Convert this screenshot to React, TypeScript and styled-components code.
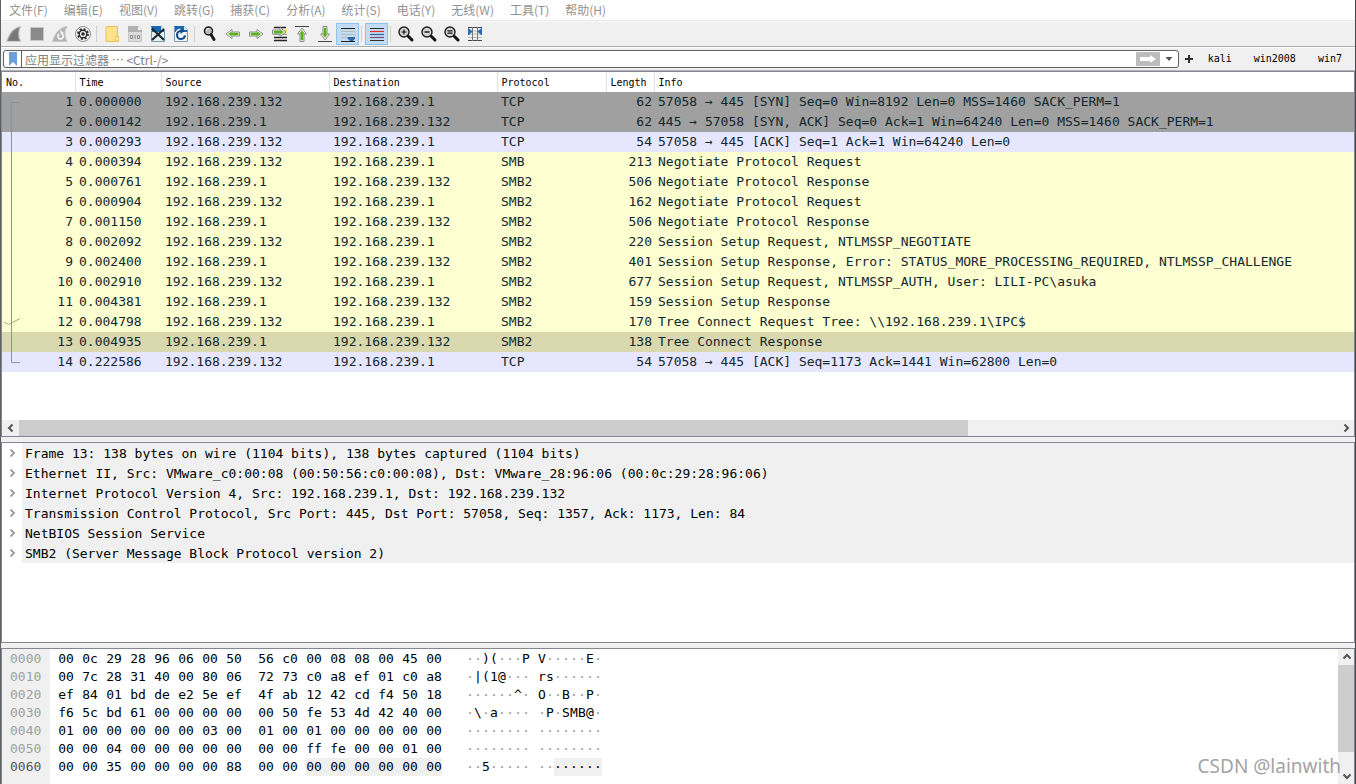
import React from "react";
import styled, { createGlobalStyle, css } from "styled-components";

const line = "#828790";
const face = "#f0f0f0";
const mono = `"DejaVu Sans Mono", "Liberation Mono", monospace`;
const cjk = `"Noto Sans CJK SC", "Noto Sans", sans-serif`;

const GlobalStyle = createGlobalStyle`
  * { box-sizing: border-box; }
  body { margin: 0; background: ${face}; color: #000; font-family: ${cjk}; font-size: 12px; }
  button, input { font: inherit; color: inherit; margin: 0; padding: 0; border: 0; background: none; }
`;

const Window = styled.div`
  position: relative;
  display: grid;
  grid-template-rows: auto auto auto minmax(0, 366fr) 5px minmax(0, 201fr) 5px minmax(0, 136fr);
  grid-template-columns: minmax(0, 1fr);
  height: 100vh;
  overflow: hidden;
  border-left: 1px solid #5c6266;
  border-right: 1px solid #45484c;
`;

const MenuBar = styled.nav`
  display: flex;
  gap: 16px;
  height: 21px;
  padding-left: 8px;
  background: #fff;
  border-bottom: 1px solid #e8e8e8;
`;

const MenuItem = styled.button`
  height: 20px;
  line-height: 20px;
  color: #929292;
  white-space: nowrap;
`;

const ToolBar = styled.div`
  display: flex;
  align-items: center;
  height: 26px;
  padding-left: 1px;
  background: ${face};
  border-top: 1px solid #fafafa;
  border-bottom: 1px solid #adadad;
`;

const ToolButton = styled.button<{ $on?: boolean }>`
  display: flex;
  align-items: center;
  justify-content: center;
  width: 23px;
  height: 22px;
  flex: none;
  ${(p) => p.$on && css`
    background: #c2ddf3;
    border: 1px solid #90c3ec;
  `}
`;

const Separator = styled.span`
  width: 1px;
  height: 16px;
  margin: 0 3px 0 2px;
  flex: none;
  background: #cfcfcf;
`;

const FilterBar = styled.form`
  display: flex;
  align-items: center;
  height: 24px;
  padding: 0 13px 0 2px;
  background: ${face};
  border-top: 1px solid #fff;
  border-bottom: 1px solid #b4b4b4;
`;

const FilterBox = styled.div`
  display: flex;
  align-items: center;
  flex: 1;
  min-width: 0;
  height: 18px;
  background: #fff;
  border: 1px solid #606060;
  border-radius: 3px;
`;

const BookmarkButton = styled.button`
  display: flex;
  align-items: center;
  justify-content: center;
  width: 18px;
  height: 16px;
  flex: none;
  border-right: 1px solid #606060;
`;

const FilterInput = styled.input`
  flex: 1;
  min-width: 0;
  height: 16px;
  padding-left: 3px;
  outline: none;
  &::placeholder { color: #808080; opacity: 1; }
`;

const ApplyButton = styled.button`
  display: flex;
  align-items: center;
  justify-content: center;
  width: 24px;
  height: 14px;
  border-radius: 1px;
  background: #bcbcbc;
`;

const HistoryButton = styled.button`
  display: flex;
  align-items: center;
  justify-content: center;
  width: 18px;
  height: 16px;
`;

const AddButton = styled(HistoryButton)`
  width: 20px;
`;

const Shortcut = styled.button`
  margin-left: 22px;
  font-family: ${mono};
  font-size: 10px;
  line-height: 16px;
  &:first-of-type { margin-left: 9px; }
`;

const Shortcuts = styled.div`
  display: flex;
`;

const Pane = styled.section`
  display: flex;
  flex-direction: column;
  overflow: hidden;
  background: #fff;
  border: 1px solid ${line};
`;

const Splitter = styled.div`
  background: ${face};
`;

const TableArea = styled.div`
  flex: 1;
  min-height: 0;
  overflow: hidden;
`;

const PacketTable = styled.table`
  width: 100%;
  table-layout: fixed;
  border-collapse: collapse;
`;

const Col = styled.col<{ $w?: number }>`
  ${(p) => p.$w && `width: ${p.$w}px;`}
`;

const HeadCell = styled.th`
  height: 20px;
  padding: 1px 0 0 4px;
  border-right: 1px solid #e2e2e2;
  font-family: ${mono};
  font-size: 10px;
  font-weight: 400;
  line-height: 19px;
  text-align: left;
  white-space: nowrap;
  &:last-child { border-right: 0; }
`;

type Tone = "gray" | "lavender" | "yellow" | "selected";
const tones: Record<Tone, string> = {
  gray: "#a0a0a0",
  lavender: "#e7e6ff",
  yellow: "#feffd0",
  selected: "#d9d8af",
};

const PacketRow = styled.tr<{ $tone: Tone }>`
  background: ${(p) => tones[p.$tone]};
  color: #12272e;
`;

const Cell = styled.td<{ $right?: boolean }>`
  height: 20px;
  padding: 0 2px 0 4px;
  font-family: ${mono};
  font-size: 13px;
  line-height: 20px;
  text-align: ${(p) => (p.$right ? "right" : "left")};
  white-space: nowrap;
  overflow: hidden;
`;

const NumberCell = styled(Cell)`
  padding-left: 0;
`;

const NumberBox = styled.div`
  display: flex;
  justify-content: space-between;
`;

const HScroll = styled.div`
  display: flex;
  height: 16px;
  flex: none;
  background: ${face};
`;

const VScroll = styled.div`
  display: flex;
  flex-direction: column;
  width: 16px;
  flex: none;
  background: ${face};
`;

const ScrollButton = styled.button`
  display: flex;
  align-items: center;
  justify-content: center;
  width: 17px;
  height: 16px;
  flex: none;
`;

const Track = styled.div`
  flex: 1;
  min-height: 0;
`;

const Thumb = styled.div<{ $w?: string; $h?: string }>`
  width: ${(p) => p.$w ?? "100%"};
  height: ${(p) => p.$h ?? "100%"};
  background: #cdcdcd;
`;

const Tree = styled.ul`
  margin: 0;
  padding: 0;
  list-style: none;
`;

const TreeItem = styled.li`
  display: flex;
  height: 20px;
  font-family: ${mono};
  font-size: 13px;
  line-height: 22px;
  white-space: nowrap;
`;

const Expander = styled.button`
  display: flex;
  align-items: center;
  justify-content: center;
  width: 20px;
  flex: none;
`;

const TreeLabel = styled.span`
  flex: 1;
  padding-left: 3px;
  overflow: hidden;
  background: ${face};
`;

const HexPane = styled(Pane)`
  flex-direction: row;
  border-bottom: 0;
`;

const Offsets = styled.div`
  width: 48px;
  flex: none;
  padding: 1px 0 0 8px;
  background: ${face};
  font-family: ${mono};
  font-size: 13px;
  line-height: 18px;
`;

const Offset = styled.div<{ $active: boolean }>`
  color: ${(p) => (p.$active ? "#555" : "#a0a0a0")};
`;

const Dump = styled.div`
  flex: 1;
  min-width: 0;
  padding: 1px 0 0 4px;
  overflow: hidden;
  font-family: ${mono};
  font-size: 13px;
  line-height: 18px;
`;

const DumpRow = styled.div`
  display: flex;
  height: 18px;
`;

const ByteGroup = styled.div`
  display: flex;
  margin-right: 8px;
`;

const ByteCell = styled.span<{ $hot: boolean; $first: boolean; $last: boolean }>`
  width: 24px;
  text-align: center;
  ${(p) => p.$hot && css`
    background: linear-gradient(${face}, ${face}) no-repeat
      ${p.$first ? "right" : "left"} / ${p.$first || p.$last ? "20px" : "24px"} 100%;
  `}
`;

const CharGroup = styled.div`
  display: flex;
  margin-right: 8px;
`;

const AsciiArea = styled.div`
  display: flex;
  margin-left: 12px;
`;

const CharCell = styled.span<{ $dot: boolean; $hot: boolean }>`
  width: 8px;
  text-align: center;
  color: ${(p) => (p.$dot && !p.$hot ? "#9a9a9a" : "#000")};
  background: ${(p) => (p.$hot ? face : "transparent")};
`;

const Watermark = styled.div`
  position: absolute;
  right: 14px;
  bottom: 4px;
  font-family: "Noto Sans", sans-serif;
  font-size: 19px;
  line-height: 28px;
  color: #a3a3a3;
  text-shadow: -1px -1px 0 #fff;
  pointer-events: none;
`;

const Svg = ({ children, w = 18, h = 18 }: { children: React.ReactNode; w?: number; h?: number }) => (
  <svg width={w} height={h} viewBox={`0 0 ${w} ${h}`} fill="none" aria-hidden="true">
    {children}
  </svg>
);

const FinIcon = () => (
  <Svg>
    <path d="M1.500 16.500C4 9 8 2.500 16 1.500C13 6 13.500 12 16 16.500Z" fill="#8b8b8b" stroke="#d0d0d0" />
    <path d="M3.500 15.500C6 10 9 5 13.500 3.500C12 7 12 11.500 14 15.500Z" fill="#777" />
  </Svg>
);
const StopIcon = () => (
  <Svg><rect x="2.500" y="2.500" width="13" height="13" fill="#8a8a8a" stroke="#c8c8c8" /></Svg>
);
const RestartIcon = () => (
  <Svg>
    <path d="M1.500 16.500C4 9 8 2.500 16 1.500C13 6 13.500 12 16 16.500Z" fill="#b2b2b2" stroke="#c8c8c8" />
    <path d="M8 9C6 11 7 14 9.500 14C12 14 13 11.500 11.500 9" stroke="#f4f4f4" strokeWidth="1.800" />
    <path d="M9.500 10V5L13 8Z" fill="#f4f4f4" />
  </Svg>
);
const GearIcon = () => (
  <Svg>
    <circle cx="9" cy="9" r="7.500" fill="#f2f2f2" stroke="#8e8e8e" />
    <circle cx="9" cy="9" r="5" stroke="#2a2a2a" strokeWidth="1.800" strokeDasharray="2 1.927" />
    <circle cx="9" cy="9" r="3.800" stroke="#2a2a2a" strokeWidth="1.400" />
    <circle cx="9" cy="9" r="1.800" fill="#2a2a2a" />
  </Svg>
);
const FolderIcon = () => (
  <Svg>
    <path d="M3 1.500H14.500V11.500H15.500V16.500H3Z" fill="#ffe28a" stroke="#e9c254" />
    <path d="M12.500 16V11.500H15.500V16Z" fill="#fff0b8" stroke="#e9c254" />
  </Svg>
);
const BinaryDocIcon = () => (
  <Svg>
    <path d="M2.500 1.500H12L15.500 5V16.500H2.500Z" fill="#dcdcdc" stroke="#c4c4c4" />
    <path d="M2 1H12L16 5V7H2Z" fill="#b2b2b2" />
    <path d="M12 1V5H16Z" fill="#eee" />
    <path d="M4.500 10.500h2v3h-2zM11.500 10.500h2v3h-2zM9 10v4" stroke="#8c8c8c" />
  </Svg>
);
const CloseDocIcon = () => (
  <Svg>
    <rect x="2" y="1" width="14" height="16" fill="#e8efe6" />
    <path d="M2 1H12L16 5V7H2Z" fill="#1768b0" />
    <path d="M12 1V5H16Z" fill="#d6e6f2" />
    <path d="M2.500 1.500V16.500H15.500V5" stroke="#7d9bb2" />
    <path d="M3 3.500L15 15M15 4L3 15" stroke="#1c2a33" strokeWidth="2.200" />
  </Svg>
);
const ReloadDocIcon = () => (
  <Svg>
    <rect x="2" y="1" width="14" height="16" fill="#f0f3ee" />
    <path d="M2 1H12L16 5V7H2Z" fill="#1768b0" />
    <path d="M12 1V5H16Z" fill="#d6e6f2" />
    <path d="M2.500 1.500V16.500H15.500V5" stroke="#7d9bb2" />
    <path d="M12.500 11.500A4 4 0 1 1 9 5.500" stroke="#fff" strokeWidth="4" />
    <path d="M13 10.500A4 4 0 1 1 9 6" stroke="#174e8d" strokeWidth="2.200" />
    <path d="M8.500 3L12.500 6L8.500 9Z" fill="#174e8d" />
  </Svg>
);
const FindIcon = () => (
  <Svg>
    <circle cx="7.500" cy="6" r="4" fill="#bbb" stroke="#1a1a1a" strokeWidth="1.500" />
    <path d="M5.500 6A2.500 2.500 0 0 1 8 3.500" stroke="#fff" />
    <path d="M10 9.500L13 14.500" stroke="#1a1a1a" strokeWidth="3" strokeLinecap="round" />
  </Svg>
);
const arrowPath = "M2 9L8 4.500V7H15.500V11H8V13.500Z";
const GreenArrow = ({ turn }: { turn: number }) => (
  <g transform={`rotate(${turn} 9 9)`}>
    <path d={arrowPath} fill="#fff" stroke="#8b8b8b" strokeLinejoin="round" />
    <path d="M4.500 9L7.500 7V8H14V10H7.500V11Z" fill="#57b51b" stroke="#57b51b" strokeWidth="0.600" />
  </g>
);
const BackIcon = () => <Svg><GreenArrow turn={0} /></Svg>;
const ForwardIcon = () => <Svg><GreenArrow turn={180} /></Svg>;
const GotoIcon = () => (
  <Svg>
    <path d="M4 2.500H16M4 12.500H17M4 15.500H17" stroke="#222" strokeWidth="1.400" />
    <path d="M12 6.500H17" stroke="#ffdf55" strokeWidth="4" />
    <path d="M4 9.500H17" stroke="#999" />
    <g transform="translate(0 -2)"><GreenArrow turn={180} /></g>
  </Svg>
);
const FirstIcon = () => (
  <Svg>
    <path d="M2 1.500H16" stroke="#444" />
    <g transform="translate(0 1)"><GreenArrow turn={90} /></g>
  </Svg>
);
const LastIcon = () => (
  <Svg>
    <path d="M2 16.500H16" stroke="#444" />
    <g transform="translate(0 -1)"><GreenArrow turn={270} /></g>
  </Svg>
);
const AutoScrollIcon = () => (
  <Svg>
    <path d="M2 3.500H16M2 16.500H16" stroke="#222" strokeWidth="1.200" />
    <path d="M2 6.500H16M2 9.500H16M2 12.500H8" stroke="#b9bdb4" />
    <path d="M8.500 12H16V13.500L14 16H11L8.500 13.500Z" fill="#3068ae" />
  </Svg>
);
const ColorizeIcon = () => (
  <Svg>
    <path d="M2 3.500H16M2 15.500H16" stroke="#333" strokeWidth="1.200" />
    <path d="M2 6.500H16" stroke="#ef2a2a" strokeWidth="1.200" />
    <path d="M2 9.500H16" stroke="#2c5fa8" strokeWidth="1.200" />
    <path d="M2 12.500H16" stroke="#7a4a78" strokeWidth="1.200" />
  </Svg>
);
const ZoomIcon = ({ kind }: { kind: "in" | "out" | "same" }) => (
  <Svg>
    <circle cx="7" cy="7" r="5" fill="#d4d4d4" stroke="#1d1d1d" strokeWidth="1.400" />
    <path d="M11.500 11.500L15 15" stroke="#111" strokeWidth="3" strokeLinecap="round" />
    {kind === "in" && <path d="M4.500 7H9.500M7 4.500V9.500" stroke="#111" strokeWidth="1.200" />}
    {kind === "out" && <path d="M4.500 7H9.500" stroke="#111" strokeWidth="1.400" />}
    {kind === "same" && <path d="M4.500 5.800H9.500M4.500 8.200H9.500" stroke="#111" strokeWidth="1.200" />}
  </Svg>
);
const ResizeColumnsIcon = () => (
  <Svg>
    <path d="M2 2.500H16M2 15.500H16" stroke="#444" />
    <path d="M2 6H16M2 9H16M2 12.500H16" stroke="#b9bdb4" />
    <path d="M6.500 2V16M11.500 2V16" stroke="#777" />
    <path d="M2.500 3.500L6 6.500L2.500 10Z M15.500 3.500L12 6.500L15.500 10Z" fill="#2d69b0" stroke="#2d69b0" />
  </Svg>
);

const chevrons = {
  left: "M6.500 1.500L3 5L6.500 8.500",
  right: "M3.500 1.500L7 5L3.500 8.500",
  up: "M1.500 6.500L5 3L8.500 6.500",
  down: "M1.500 3.500L5 7L8.500 3.500",
};
const Chevron = ({ dir, color = "#555" }: { dir: keyof typeof chevrons; color?: string }) => (
  <Svg w={10} h={10}><path d={chevrons[dir]} stroke={color} strokeWidth="2" /></Svg>
);

const TrackMark = ({ index, count, related }: { index: number; count: number; related: boolean }) => {
  const d = index === 0 ? "M18 10.500H9.500V20" : index === count - 1 ? "M9.500 0V10.500H18" : "M9.500 0V20";
  return (
    <Svg w={20} h={20}>
      <path d={d} stroke="#8a949b" />
      {related && <path d="M2 10L6.500 12.500L18 6.500" stroke="#a5a995" />}
    </Svg>
  );
};

const menus = ["文件(F)", "编辑(E)", "视图(V)", "跳转(G)", "捕获(C)", "分析(A)", "统计(S)", "电话(Y)", "无线(W)", "工具(T)", "帮助(H)"];

type Tool = { label: string; icon: React.ReactNode; on?: boolean } | null;
const tools: Tool[] = [
  { label: "开始捕获", icon: <FinIcon /> },
  { label: "停止捕获", icon: <StopIcon /> },
  { label: "重新开始捕获", icon: <RestartIcon /> },
  { label: "捕获选项", icon: <GearIcon /> },
  null,
  { label: "打开", icon: <FolderIcon /> },
  { label: "保存", icon: <BinaryDocIcon /> },
  { label: "关闭", icon: <CloseDocIcon /> },
  { label: "重新加载", icon: <ReloadDocIcon /> },
  null,
  { label: "查找分组", icon: <FindIcon /> },
  { label: "上一分组", icon: <BackIcon /> },
  { label: "下一分组", icon: <ForwardIcon /> },
  { label: "转到分组", icon: <GotoIcon /> },
  { label: "首个分组", icon: <FirstIcon /> },
  { label: "最新分组", icon: <LastIcon /> },
  { label: "自动滚动", icon: <AutoScrollIcon />, on: true },
  null,
  { label: "着色", icon: <ColorizeIcon />, on: true },
  null,
  { label: "放大", icon: <ZoomIcon kind="in" /> },
  { label: "缩小", icon: <ZoomIcon kind="out" /> },
  { label: "正常大小", icon: <ZoomIcon kind="same" /> },
  { label: "调整列宽", icon: <ResizeColumnsIcon /> },
];

const columns: { name: string; w?: number }[] = [
  { name: "No.", w: 73 },
  { name: "Time", w: 86 },
  { name: "Source", w: 168 },
  { name: "Destination", w: 168 },
  { name: "Protocol", w: 109 },
  { name: "Length", w: 48 },
  { name: "Info" },
];

const client = "192.168.239.132";
const server = "192.168.239.1";
type Packet = [time: string, fromClient: boolean, protocol: string, length: number, info: string, tone: Tone];
const packets: Packet[] = [
  ["0.000000", true, "TCP", 62, "57058 → 445 [SYN] Seq=0 Win=8192 Len=0 MSS=1460 SACK_PERM=1", "gray"],
  ["0.000142", false, "TCP", 62, "445 → 57058 [SYN, ACK] Seq=0 Ack=1 Win=64240 Len=0 MSS=1460 SACK_PERM=1", "gray"],
  ["0.000293", true, "TCP", 54, "57058 → 445 [ACK] Seq=1 Ack=1 Win=64240 Len=0", "lavender"],
  ["0.000394", true, "SMB", 213, "Negotiate Protocol Request", "yellow"],
  ["0.000761", false, "SMB2", 506, "Negotiate Protocol Response", "yellow"],
  ["0.000904", true, "SMB2", 162, "Negotiate Protocol Request", "yellow"],
  ["0.001150", false, "SMB2", 506, "Negotiate Protocol Response", "yellow"],
  ["0.002092", true, "SMB2", 220, "Session Setup Request, NTLMSSP_NEGOTIATE", "yellow"],
  ["0.002400", false, "SMB2", 401, "Session Setup Response, Error: STATUS_MORE_PROCESSING_REQUIRED, NTLMSSP_CHALLENGE", "yellow"],
  ["0.002910", true, "SMB2", 677, "Session Setup Request, NTLMSSP_AUTH, User: LILI-PC\\asuka", "yellow"],
  ["0.004381", false, "SMB2", 159, "Session Setup Response", "yellow"],
  ["0.004798", true, "SMB2", 170, "Tree Connect Request Tree: \\\\192.168.239.1\\IPC$", "yellow"],
  ["0.004935", false, "SMB2", 138, "Tree Connect Response", "selected"],
  ["0.222586", true, "TCP", 54, "57058 → 445 [ACK] Seq=1173 Ack=1441 Win=62800 Len=0", "lavender"],
];

const details = [
  "Frame 13: 138 bytes on wire (1104 bits), 138 bytes captured (1104 bits)",
  "Ethernet II, Src: VMware_c0:00:08 (00:50:56:c0:00:08), Dst: VMware_28:96:06 (00:0c:29:28:96:06)",
  "Internet Protocol Version 4, Src: 192.168.239.1, Dst: 192.168.239.132",
  "Transmission Control Protocol, Src Port: 445, Dst Port: 57058, Seq: 1357, Ack: 1173, Len: 84",
  "NetBIOS Session Service",
  "SMB2 (Server Message Block Protocol version 2)",
];

const hexRows: [offset: string, bytes: string, text: string][] = [
  ["0000", "00 0c 29 28 96 06 00 50 56 c0 00 08 08 00 45 00", "··)(···PV·····E·"],
  ["0010", "00 7c 28 31 40 00 80 06 72 73 c0 a8 ef 01 c0 a8", "·|(1@···rs······"],
  ["0020", "ef 84 01 bd de e2 5e ef 4f ab 12 42 cd f4 50 18", "······^·O··B··P·"],
  ["0030", "f6 5c bd 61 00 00 00 00 00 50 fe 53 4d 42 40 00", "·\\·a·····P·SMB@·"],
  ["0040", "01 00 00 00 00 00 03 00 01 00 01 00 00 00 00 00", "················"],
  ["0050", "00 00 04 00 00 00 00 00 00 00 ff fe 00 00 01 00", "················"],
  ["0060", "00 00 35 00 00 00 00 88 00 00 00 00 00 00 00 00", "··5·············"],
];

const isHot = (row: number, i: number) => row === 6 && i >= 10;

const HexLine = ({ row }: { row: number }) => {
  const bytes = hexRows[row][1].split(" ");
  const chars = Array.from(hexRows[row][2]);
  return (
    <DumpRow>
      {[0, 8].map((start) => (
        <ByteGroup key={start}>
          {bytes.slice(start, start + 8).map((b, i) => (
            <ByteCell key={i} $hot={isHot(row, start + i)} $first={start + i === 10} $last={start + i === 15}>{b}</ByteCell>
          ))}
        </ByteGroup>
      ))}
      <AsciiArea>
        {[0, 8].map((start) => (
          <CharGroup key={start}>
            {chars.slice(start, start + 8).map((c, i) => (
              <CharCell key={i} $dot={c === "·"} $hot={isHot(row, start + i)}>{c}</CharCell>
            ))}
          </CharGroup>
        ))}
      </AsciiArea>
    </DumpRow>
  );
};

export default function App() {
  return (
    <Window lang="zh-CN">
      <GlobalStyle />
      <MenuBar>{menus.map((m) => <MenuItem key={m} type="button">{m}</MenuItem>)}</MenuBar>
      <ToolBar>
        {tools.map((t, i) =>
          t ? <ToolButton key={i} type="button" aria-label={t.label} $on={t.on}>{t.icon}</ToolButton> : <Separator key={i} />
        )}
      </ToolBar>
      <FilterBar onSubmit={(e) => e.preventDefault()}>
        <FilterBox>
          <BookmarkButton type="button" aria-label="书签">
            <Svg w={10} h={14}><path d="M1 0H9V14L5 10L1 14Z" fill="#6d9fdb" /></Svg>
          </BookmarkButton>
          <FilterInput aria-label="显示过滤器" placeholder="应用显示过滤器 … <Ctrl-/>" />
          <ApplyButton type="submit" aria-label="应用">
            <Svg w={18} h={10}><path d="M1 3H11V1L17 5L11 9V7H1Z" fill="#fff" /></Svg>
          </ApplyButton>
          <HistoryButton type="button" aria-label="历史">
            <Svg w={8} h={6}><path d="M0.500 1H7.500L4 5Z" fill="#555" /></Svg>
          </HistoryButton>
        </FilterBox>
        <AddButton type="button" aria-label="添加">
          <Svg w={10} h={10}><path d="M1 5H9M5 1V9" stroke="#333" strokeWidth="2" /></Svg>
        </AddButton>
        <Shortcuts>
          <Shortcut type="button">kali</Shortcut>
          <Shortcut type="button">win2008</Shortcut>
          <Shortcut type="button">win7</Shortcut>
        </Shortcuts>
      </FilterBar>

      <Pane>
        <TableArea>
          <PacketTable>
            <colgroup>{columns.map((c) => <Col key={c.name} $w={c.w} />)}</colgroup>
            <thead>
              <tr>{columns.map((c) => <HeadCell key={c.name} scope="col">{c.name}</HeadCell>)}</tr>
            </thead>
            <tbody>
              {packets.map(([time, out, protocol, length, info, tone], i) => (
                <PacketRow key={i} $tone={tone}>
                  <NumberCell>
                    <NumberBox>
                      <TrackMark index={i} count={packets.length} related={i === 11} />
                      <span>{i + 1}</span>
                    </NumberBox>
                  </NumberCell>
                  <Cell>{time}</Cell>
                  <Cell>{out ? client : server}</Cell>
                  <Cell>{out ? server : client}</Cell>
                  <Cell>{protocol}</Cell>
                  <Cell $right>{length}</Cell>
                  <Cell>{info}</Cell>
                </PacketRow>
              ))}
            </tbody>
          </PacketTable>
        </TableArea>
        <HScroll>
          <ScrollButton type="button" aria-label="向左"><Chevron dir="left" /></ScrollButton>
          <Track><Thumb $w="72%" /></Track>
          <ScrollButton type="button" aria-label="向右"><Chevron dir="right" /></ScrollButton>
        </HScroll>
      </Pane>
      <Splitter />
      <Pane>
        <Tree>
          {details.map((d) => (
            <TreeItem key={d}>
              <Expander type="button" aria-label="展开"><Chevron dir="right" color="#a0a0a0" /></Expander>
              <TreeLabel>{d}</TreeLabel>
            </TreeItem>
          ))}
        </Tree>
      </Pane>
      <Splitter />
      <HexPane>
        <Offsets>
          {hexRows.map(([o], i) => <Offset key={o} $active={i === 6}>{o}</Offset>)}
        </Offsets>
        <Dump>{hexRows.map((r, i) => <HexLine key={r[0]} row={i} />)}</Dump>
        <VScroll>
          <ScrollButton type="button" aria-label="向上"><Chevron dir="up" /></ScrollButton>
          <Track><Thumb $h="84%" /></Track>
          <ScrollButton type="button" aria-label="向下"><Chevron dir="down" /></ScrollButton>
        </VScroll>
      </HexPane>
      <Watermark>CSDN @lainwith</Watermark>
    </Window>
  );
}
